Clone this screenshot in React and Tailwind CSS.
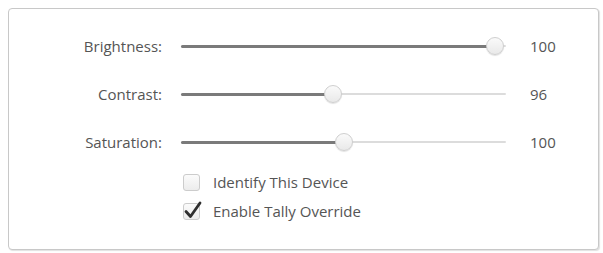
import React from 'react';

const sliders = [
  { label: 'Brightness:', value: 100, pos: 96.6 },
  { label: 'Contrast:', value: 96, pos: 46.8 },
  { label: 'Saturation:', value: 100, pos: 50.2 },
];

const Slider = ({ pos }) => (
  <div className="relative h-[20px] w-[325px] flex items-center">
    <div className="absolute left-0 right-0 h-[2px] bg-[#dcdcdc] rounded-full" />
    <div className="absolute left-0 h-[3px] bg-[#7a7a7a] rounded-full" style={{ width: `${pos}%` }} />
    <div
      className="absolute top-[1px] h-[18px] w-[18px] -ml-[9px] rounded-full border border-[#cfcfcf] bg-gradient-to-b from-[#fafafa] to-[#e9e9e9] shadow-[0_1px_1px_rgba(0,0,0,0.12)]"
      style={{ left: `${pos}%` }}
    />
  </div>
);

const Checkbox = ({ checked, label }) => (
  <div className="flex items-center h-[29px]">
    <div className="relative h-[17px] w-[17px] rounded-[3px] border border-[#cccccc] bg-gradient-to-b from-[#fbfbfb] to-[#ececec]">
      {checked && (
        <svg className="absolute -top-[4px] -left-[1px]" width="20" height="20" viewBox="0 0 20 20">
          <path d="M3 11.5 L7.5 16.5 L17 3" fill="none" stroke="#2f2f2f" strokeWidth="2.8" strokeLinecap="round" strokeLinejoin="round" />
        </svg>
      )}
    </div>
    <span className="ml-[13px] text-[15px] text-[#555555]">{label}</span>
  </div>
);

export default function App() {
  return (
    <div className="w-[603px] h-[253px] bg-white p-2" style={{ fontFamily: '"Open Sans", "Liberation Sans", sans-serif' }}>
      <div className="h-[242px] w-[591px] border border-[#c8c8c8] rounded-[4px] bg-white shadow-[1px_1px_1px_rgba(0,0,0,0.12)] pt-[13px]">
        {sliders.map((s) => (
          <div key={s.label} className="flex items-center h-[48px]">
            <div className="w-[153px] text-right text-[15px] text-[#555555]">{s.label}</div>
            <div className="ml-[19px]">
              <Slider pos={s.pos} />
            </div>
            <div className="ml-[24px] text-[15px] text-[#555555]">{s.value}</div>
          </div>
        ))}
        <div className="mt-[2px] pl-[174px]">
          <Checkbox checked={false} label="Identify This Device" />
          <Checkbox checked label="Enable Tally Override" />
        </div>
      </div>
    </div>
  );
}
